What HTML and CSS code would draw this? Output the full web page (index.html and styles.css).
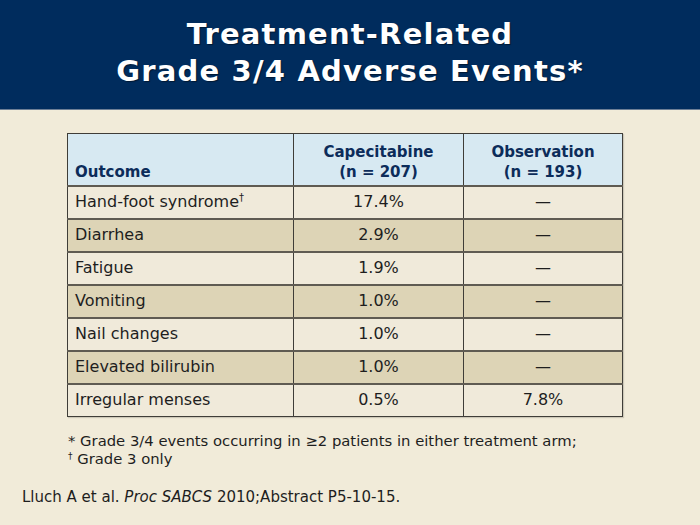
FILE: index.html
```html
<!DOCTYPE html>
<html>
<head>
<meta charset="utf-8">
<link rel="stylesheet" href="styles.css">
</head>
<body>
<header class="banner">
  <h1 class="title">Treatment-Related<br>Grade 3/4 Adverse Events*</h1>
</header>
<main class="content">
  <table class="ae-table">
    <thead>
      <tr>
        <th class="col-outcome">Outcome</th>
        <th class="col-cape">Capecitabine<br>(n = 207)</th>
        <th class="col-obs">Observation<br>(n = 193)</th>
      </tr>
    </thead>
    <tbody>
      <tr class="light"><td>Hand-foot syndrome<sup>†</sup></td><td>17.4%</td><td>—</td></tr>
      <tr class="dark"><td>Diarrhea</td><td>2.9%</td><td>—</td></tr>
      <tr class="light"><td>Fatigue</td><td>1.9%</td><td>—</td></tr>
      <tr class="dark"><td>Vomiting</td><td>1.0%</td><td>—</td></tr>
      <tr class="light"><td>Nail changes</td><td>1.0%</td><td>—</td></tr>
      <tr class="dark"><td>Elevated bilirubin</td><td>1.0%</td><td>—</td></tr>
      <tr class="light"><td>Irregular menses</td><td>0.5%</td><td>7.8%</td></tr>
    </tbody>
  </table>
  <div class="notes">
    <p>* Grade 3/4 events occurring in ≥2 patients in either treatment arm;</p>
    <p><sup>†</sup> Grade 3 only</p>
  </div>
  <p class="citation">Lluch A et al. <em>Proc SABCS</em> 2010;Abstract P5-10-15.</p>
</main>
</body>
</html>
```

FILE: styles.css
```css
html, body {
  margin: 0;
  padding: 0;
}
body {
  width: 700px;
  height: 525px;
  overflow: hidden;
  background: #f1ebd9;
  font-family: "DejaVu Sans", Verdana, sans-serif;
  color: #1e1e1e;
}
.banner {
  height: 109px;
  background: #002c5d;
  border-bottom: 1px solid #6d7f96;
  display: flex;
  align-items: flex-start;
  justify-content: center;
}
.title {
  margin: 16px 0 0;
  font-size: 29px;
  line-height: 37px;
  font-weight: bold;
  color: #ffffff;
  text-align: center;
  letter-spacing: 1.2px;
  text-shadow: 1px 1px 1px rgba(0, 0, 0, 0.45);
}
.content {
  padding: 23px 0 0 0;
}
.ae-table {
  margin-left: 67px;
  width: 556px;
  border-collapse: collapse;
  border: 1.5px solid #3f3d38;
  box-shadow: 1px 1px 1px rgba(0, 0, 0, 0.15);
}
.ae-table th {
  background: #d7e9f2;
  color: #0c2c5a;
  font-size: 15px;
  line-height: 20px;
  font-weight: bold;
  height: 52px;
  padding: 0 0 3px;
  vertical-align: bottom;
  border-right: 1.5px solid #3f3d38;
  border-bottom: 2px solid #5f5b52;
  box-sizing: border-box;
}
.ae-table th.col-outcome {
  width: 226px;
  text-align: left;
  padding-left: 7px;
}
.ae-table th.col-cape {
  width: 170px;
  text-align: center;
}
.ae-table th.col-obs {
  text-align: center;
}
.ae-table td {
  height: 31px;
  font-size: 16px;
  line-height: 20px;
  padding: 0;
  text-align: center;
  border-right: 1.5px solid #3f3d38;
  border-bottom: 2px solid #5f5b52;
}
.ae-table td:first-child {
  text-align: left;
  padding-left: 7px;
}
.ae-table tr:last-child td {
  border-bottom: none;
}
.ae-table tr.light td {
  background: #f0eada;
}
.ae-table tr.dark td {
  background: #ddd4b6;
}
.ae-table sup {
  font-size: 10px;
  vertical-align: 6px;
  line-height: 0;
}
.notes {
  margin: 15px 0 0 68px;
  font-size: 14.8px;
  line-height: 18px;
}
.notes p {
  margin: 0;
}
.notes sup {
  font-size: 9px;
  vertical-align: 5px;
  line-height: 0;
}
.citation {
  margin: 20px 0 0 22px;
  font-size: 15px;
  line-height: 18px;
}
.citation em {
  font-style: italic;
}
```
